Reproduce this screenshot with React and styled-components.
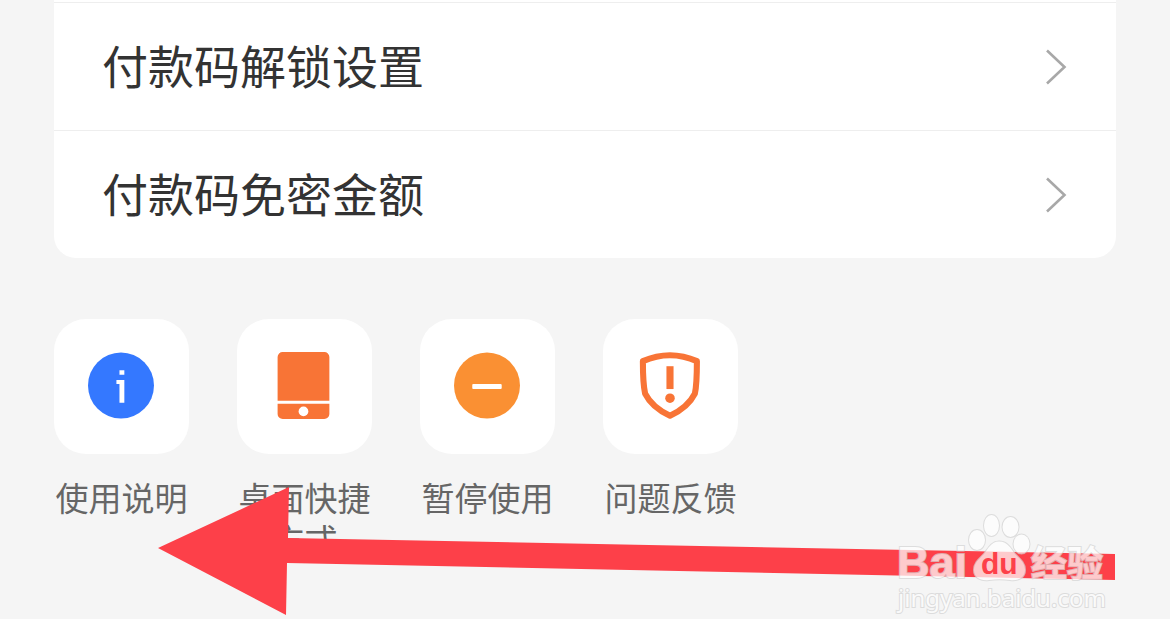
import React from 'react'
import styled,{createGlobalStyle} from 'styled-components'

const settings=['付款码解锁设置','付款码免密金额'];
const actions=[
  {label:'使用说明',Icon:InfoIcon},
  {label:'桌面快捷方式',Icon:DeviceIcon},
  {label:'暂停使用',Icon:PauseIcon},
  {label:'问题反馈',Icon:ShieldIcon},
];

function InfoIcon(){
  return (
    <svg width="67" height="67" viewBox="0 0 66 66" aria-hidden="true">
      <circle cx="32.500" cy="33" r="32.500" fill="#3478ff"/>
      <path d="M31 18h4.800v4.500H31zM28 27.500h7.800V50H31V31.500h-3z" fill="#fff"/>
    </svg>
  )
}
function DeviceIcon(){
  return (
    <svg width="67" height="67" viewBox="0 0 66 66" aria-hidden="true">
      <path d="M11.500 0h41a5 5 0 0 1 5 5v43h-51V5a5 5 0 0 1 5-5zM6.500 51h51v10a5 5 0 0 1-5 5h-41a5 5 0 0 1-5-5z" fill="#f87436"/>
      <circle cx="32" cy="58.500" r="4.800" fill="#fff"/>
    </svg>
  )
}
function PauseIcon(){
  return (
    <svg width="67" height="67" viewBox="0 0 66 66" aria-hidden="true">
      <circle cx="32.500" cy="33" r="32.500" fill="#fa9033"/>
      <rect x="18" y="31.500" width="29" height="5" rx="1" fill="#fff"/>
    </svg>
  )
}
function ShieldIcon(){
  return (
    <svg width="67" height="67" viewBox="0 0 66 66" aria-hidden="true">
      <path d="M5.800 9Q32.500 -2.500 59 9C59 22 59 32 57 41C52 51 45 57 32.500 62.800C20 57 13 51 8 41C6 32 5.800 22 5.800 9Z" fill="none" stroke="#f87436" strokeWidth="6" strokeLinejoin="round"/>
      <path d="M29 14h7v22.500h-7z" fill="#f87436"/>
      <circle cx="32.500" cy="45.500" r="4.700" fill="#f87436"/>
    </svg>
  )
}
function Chevron(){
  return (
    <svg width="22" height="36" viewBox="0 0 22 36" aria-hidden="true">
      <path d="M1 1.500L18.500 18L1 34.500" fill="none" stroke="#a8a8a8" strokeWidth="2.600"/>
    </svg>
  )
}
function Watermark(){
  return (
    <WatermarkSvg width="216" height="106" viewBox="0 0 216 106">
      <g className="logo">
        <text x="-1" y="66" className="latin" fontSize="45">Bai</text>
        <ellipse cx="79" cy="28" rx="8" ry="10"/>
        <ellipse cx="93.500" cy="13.500" rx="7.500" ry="10.500"/>
        <ellipse cx="112.500" cy="15" rx="8" ry="10"/>
        <ellipse cx="123.500" cy="32" rx="8" ry="9.500"/>
        <path d="M101 29.500C110 29.500 113 37 117 42C122 47 127 51 127 58C127 66 120 69 112 68C105 67 98 67 91 68C83 69 76 66 76 58C76 51 81 47 86 42C90 37 93 29.500 101 29.500Z"/>
        <text x="133" y="65" className="cjk" fontSize="36">经验</text>
      </g>
      <text x="83" y="62" className="latin" fontSize="30" fill="#fd4049">du</text>
      <text x="0" y="95" className="site" fontSize="24">jingyan.baidu.com</text>
    </WatermarkSvg>
  )
}

function App() {
  return (
    <>
      <GlobalStyle/>
      <Page>
        <Card>
          {settings.map((label)=>(
            <Row key={label} type="button">
              <RowLabel>{label}</RowLabel>
              <Chevron/>
            </Row>
          ))}
        </Card>
        <Actions>
          {actions.map(({label,Icon})=>(
            <Action key={label} type="button">
              <Tile><Icon/></Tile>
              <span>{label}</span>
            </Action>
          ))}
        </Actions>
        <Arrow width="958" height="130" viewBox="0 0 958 130" aria-hidden="true">
          <path d="M0 62L131 1L130 52L957 68V94L129 77L128 129Z" fill="#fd4049"/>
        </Arrow>
        <Watermark/>
      </Page>
    </>
  )
}

const GlobalStyle=createGlobalStyle`
body {
  margin: 0;
  min-height: 100vh;
  background: #fff;
  font-family: "Noto Sans CJK SC", sans-serif;
}
button {
  border: 0;
  padding: 0;
  background: none;
  font-family: inherit;
  cursor: pointer;
}
`;
const Page=styled.main`
position: relative;
padding: 0 54px 59px;
background: #f5f5f5;
overflow: hidden;
`;
const Card=styled.section`
padding-top: 2px;
background: #fff;
border-radius: 0 0 22px 22px;
`;
const Row=styled.button`
display: flex;
justify-content: space-between;
align-items: center;
width: 100%;
height: 128px;
padding: 0 48px;
border-top: 1px solid #eee;
color: #333;
font-size: 46px;
line-height: 64px;
text-align: left;
`;
const RowLabel=styled.span`
padding-bottom: 6px;
`;
const Actions=styled.section`
display: flex;
align-items: flex-start;
gap: 48px;
padding-top: 61px;
`;
const Action=styled.button`
display: flex;
flex-direction: column;
gap: 22px;
width: 135px;
color: #666;
font-size: 33px;
line-height: 42px;
text-align: center;
`;
const Tile=styled.span`
display: flex;
align-items: center;
justify-content: center;
box-sizing: border-box;
width: 100%;
height: 135px;
padding-bottom: 2px;
border-radius: 32px;
background: #fff;
`;
const Arrow=styled.svg`
position: absolute;
left: 158px;
bottom: 3px;
pointer-events: none;
`;
const WatermarkSvg=styled.svg`
position: absolute;
right: 56px;
bottom: 1px;
overflow: visible;
pointer-events: none;
.logo {
  fill: #fff;
  stroke: #d4d4d4;
  stroke-width: 2px;
  paint-order: stroke;
  opacity: 0.72;
}
.latin {
  font-family: "Liberation Sans", sans-serif;
  font-weight: 700;
}
.cjk {
  font-weight: 700;
}
.site {
  font-family: "Noto Sans", sans-serif;
  fill: #fafafa;
  stroke: #dcdcdc;
  stroke-width: 2px;
  paint-order: stroke;
}
`;
export default App
